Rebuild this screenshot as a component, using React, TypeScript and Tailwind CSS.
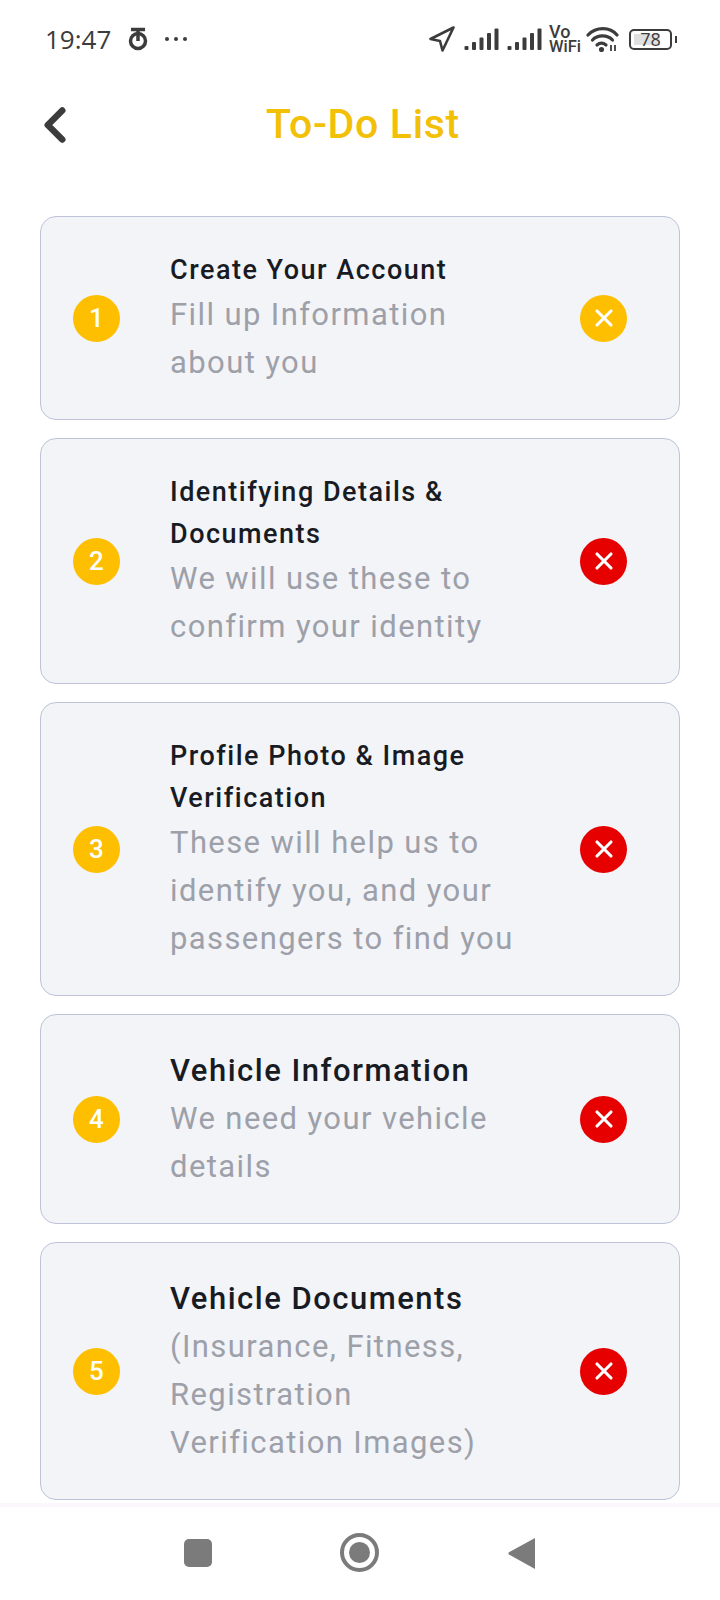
import React from 'react';
import { ChevronLeft, X } from 'lucide-react';

const steps = [
    { n: 1, title: 'Create Your Account', desc: 'Fill up Information about you', small: true, done: true },
    { n: 2, title: 'Identifying Details & Documents', desc: 'We will use these to confirm your identity', small: true },
    { n: 3, title: 'Profile Photo & Image Verification', desc: 'These will help us to identify you, and your passengers to find you', small: true },
    { n: 4, title: 'Vehicle Information', desc: 'We need your vehicle details' },
    { n: 5, title: 'Vehicle Documents', desc: '(Insurance, Fitness, Registration Verification Images)' },
];

function Signal() {
    return (
        <svg width="35" height="23" viewBox="0 0 35 23" fill="#3c3c3c">
            <rect x="0.5" y="18" width="4" height="4" rx="1" />
            <rect x="8" y="14" width="4" height="8" rx="1" />
            <rect x="15.5" y="9.5" width="4" height="12.5" rx="1" />
            <rect x="23" y="5" width="4" height="17" rx="1" />
            <rect x="30.5" y="0.5" width="4" height="21.5" rx="1" />
        </svg>
    );
}

function StatusBar() {
    return (
        <div className="h-[76px] flex items-center justify-between pl-[45px] pr-[43px] pt-[2px] text-[#3c3c3c]">
            <div className="flex items-center">
                <span className="text-[26px] leading-none font-['Open_Sans',sans-serif]">19:47</span>
                <svg className="ml-[17px]" width="20" height="24" viewBox="0 0 20 24" fill="none" stroke="#3c3c3c">
                    <path d="M3 2.5h14" strokeWidth="3.5" />
                    <circle cx="10" cy="14" r="7.5" strokeWidth="3.5" />
                    <path d="M10 4v10" strokeWidth="3.5" />
                </svg>
                <div className="ml-[17px] flex gap-[5px]">
                    <span className="w-[4px] h-[4px] rounded-full bg-[#3c3c3c]" />
                    <span className="w-[4px] h-[4px] rounded-full bg-[#3c3c3c]" />
                    <span className="w-[4px] h-[4px] rounded-full bg-[#3c3c3c]" />
                </div>
            </div>
            <div className="flex items-center">
                <svg width="26" height="26" viewBox="0 0 26 26" fill="none" stroke="#3c3c3c" strokeWidth="2.6" strokeLinejoin="round">
                    <path d="M24.5 1.5 1.5 13l9.5 2 2.5 9.5z" />
                </svg>
                <div className="ml-[9px] flex items-center gap-[8px]">
                    <Signal />
                    <Signal />
                </div>
                <div className="ml-[7px] w-[31px] flex flex-col text-[16.5px] leading-[15px] font-medium font-['Roboto',sans-serif]">
                    <span className="text-[18px]">Vo</span>
                    <span>WiFi</span>
                </div>
                <svg className="ml-[6px]" width="33" height="26" viewBox="0 0 33 26" fill="none" stroke="#3c3c3c" strokeWidth="3.2" strokeLinecap="round">
                    <path d="M2 9c8-8.5 22-8.5 29 0" />
                    <path d="M6.5 14c5-5.5 15-5.5 20 0" />
                    <path d="M11 19c3-2.5 6-2.5 9 0" />
                    <circle cx="15.5" cy="23.5" r="1" fill="#3c3c3c" />
                    <path d="M25 19v6M29 19v6" strokeWidth="1.8" strokeLinecap="butt" />
                </svg>
                <div className="ml-[10px] relative w-[43px] h-[21px] rounded-[5px] border-2 border-[#3c3c3c] flex items-center justify-center">
                    <div className="absolute left-[3px] top-[3px] bottom-[3px] w-[26px] bg-[#e0e0e0]" />
                    <span className="relative text-[18px] leading-none font-['Open_Sans',sans-serif]">78</span>
                </div>
                <div className="ml-[3px] w-[2px] h-[7px] bg-[#3c3c3c]" />
            </div>
        </div>
    );
}

function StepCard({ n, title, desc, small, done }: { n: number; title: string; desc: string; small?: boolean; done?: boolean }) {
    return (
        <div className="flex items-center rounded-[16px] border border-[#bfc3da] bg-[#f2f4f8] pl-[32px] pr-[52px] py-[32px]">
            <div className="w-[47px] h-[47px] rounded-full bg-[#fdbf00] flex items-center justify-center text-white text-[26px] font-medium leading-none shrink-0">
                {n}
            </div>
            <div className="ml-[50px] w-[350px] shrink-0">
                <div className={small ? 'text-[27px] leading-[42px] font-medium tracking-[1.5px] text-[#191b23]' : 'text-[31px] leading-[48px] font-medium tracking-[1.5px] text-[#191b23]'}>
                    {title}
                </div>
                <div className="text-[31px] leading-[48px] tracking-[1.4px] text-[#9da0a8]">{desc}</div>
            </div>
            <div className={`ml-auto w-[47px] h-[47px] rounded-full flex items-center justify-center shrink-0 ${done ? 'bg-[#fdbf00]' : 'bg-[#e60000]'}`}>
                <X size={28} color="#fff" strokeWidth={2.7} />
            </div>
        </div>
    );
}

export default function App() {
    return (
        <div className="w-[720px] h-[1600px] bg-white flex flex-col overflow-hidden font-['Roboto',sans-serif]">
            <StatusBar />
            <header className="h-[96px] relative flex items-center justify-center pl-[6px] pt-[1px]">
                <ChevronLeft className="absolute left-[26px] top-[20px]" size={58} color="#3c3c3c" strokeWidth={2.7} />
                <h1 className="text-[41px] leading-none font-medium tracking-[0.7px] text-[#f2c006]">To-Do List</h1>
            </header>
            <main className="flex-1 flex flex-col gap-[18px] pt-[44px] pl-[40px] pr-[40px]">
                {steps.map((s) => (
                    <StepCard key={s.n} {...s} />
                ))}
            </main>
            <nav className="h-[97px] shrink-0 bg-white border-t-[4px] border-[#fbf7fd] relative flex items-center">
                <div className="absolute left-[184px] top-[32px] w-[28px] h-[28px] rounded-[5px] bg-[#7b7b7b]" />
                <div className="absolute left-[340px] top-[26px] w-[39px] h-[39px] rounded-full border-[4px] border-[#7b7b7b] flex items-center justify-center">
                    <div className="w-[21px] h-[21px] rounded-full bg-[#7b7b7b]" />
                </div>
                <svg className="absolute left-[508px] top-[30px]" width="28" height="33" viewBox="0 0 28 33" fill="#7b7b7b">
                    <path d="M27 1v31L1 17.5a1.5 1.5 0 0 1 0-2.2z" />
                </svg>
            </nav>
        </div>
    );
}
